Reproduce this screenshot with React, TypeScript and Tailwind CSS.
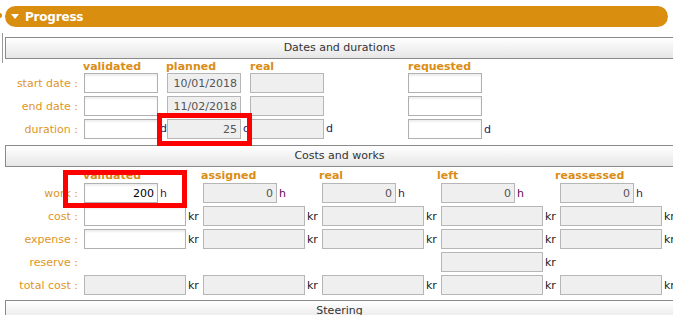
import React from "react";

type BoxProps = { className?: string; gray?: boolean; value?: string };

function Box({ className = "", gray = false, value = "" }: BoxProps) {
  return (
    <div
      className={`h-[20px] shrink-0 border flex items-center justify-end pr-[3px] text-[11px] leading-none ${
        gray
          ? "bg-[#efefef] border-[#b6b6b6] text-[#555555]"
          : "bg-white border-[#b0b0b0] shadow-[inset_0_2px_2px_rgba(0,0,0,0.07)] text-black"
      } ${className}`}
    >
      {value}
    </div>
  );
}

function Unit({ children, className = "" }: { children?: React.ReactNode; className?: string }) {
  return <span className={`pl-[2px] text-[11px] leading-none ${className}`}>{children}</span>;
}

function Label({ children }: { children: React.ReactNode }) {
  return (
    <div className="w-[84px] shrink-0 pr-[6px] text-right text-[11px] text-[#e0951f] leading-none">
      {children}
    </div>
  );
}

function SectionHeader({ title }: { title: string }) {
  return (
    <div className="ml-[5px] h-[22px] border-t border-b border-l border-[#8a8a8a] bg-gradient-to-b from-white to-[#e6e6e6] flex items-center justify-center text-[11px] text-[#333333]">
      {title}
    </div>
  );
}

const costCols = [0, 1, 2, 3, 4];

function CostRow({ label, gray }: { label: string; gray: (i: number) => boolean }) {
  return (
    <div className="flex items-center h-[20px]">
      <Label>{label}</Label>
      {costCols.map((i) => (
        <div key={i} className="w-[119px] shrink-0 flex items-center">
          <Box className="w-[102px]" gray={gray(i)} />
          <Unit className="text-[#1a1a1a]">kr</Unit>
        </div>
      ))}
    </div>
  );
}

export default function App() {
  return (
    <div className="relative w-[673px] h-[315px] overflow-hidden bg-white font-['DejaVu_Sans',sans-serif]">
      {/* stray bits of neighbouring panels */}
      <div className="absolute left-0 top-[13px] w-[2px] h-[5px] bg-[#d98e0f] rounded-r" />
      <div className="absolute left-[2px] top-[33px] w-px h-[30px] bg-[#9a9a9a]" />

      {/* Progress bar */}
      <div className="pt-[6px]">
        <div className="ml-[5px] w-[663px] h-[21px] rounded-full bg-[#d98e0f] flex items-center pl-[6px]">
          <span className="w-0 h-0 border-l-[4px] border-r-[4px] border-t-[5px] border-l-transparent border-r-transparent border-t-white mr-[6px]" />
          <span className="text-white font-bold text-[12px] tracking-[-0.2px]">Progress</span>
        </div>
      </div>

      {/* Dates and durations */}
      <div className="mt-[10px]">
        <SectionHeader title="Dates and durations" />
        <div className="flex h-[14px] items-center pl-[83px] text-[11px] font-bold text-[#da8d16] leading-none">
          <div className="w-[83px]">validated</div>
          <div className="w-[84px]">planned</div>
          <div className="w-[158px]">real</div>
          <div>requested</div>
        </div>
        <div className="flex flex-col gap-[3px]">
          <div className="flex items-center h-[20px]">
            <Label>start date :</Label>
            <Box className="w-[74px]" />
            <span className="w-[9px]" />
            <Box className="w-[74px]" gray value="10/01/2018" />
            <span className="w-[9px]" />
            <Box className="w-[74px]" gray />
            <span className="w-[84px]" />
            <Box className="w-[74px]" />
          </div>
          <div className="flex items-center h-[20px]">
            <Label>end date :</Label>
            <Box className="w-[74px]" />
            <span className="w-[9px]" />
            <Box className="w-[74px]" gray value="11/02/2018" />
            <span className="w-[9px]" />
            <Box className="w-[74px]" gray />
            <span className="w-[84px]" />
            <Box className="w-[74px]" />
          </div>
          <div className="flex items-center h-[20px]">
            <Label>duration :</Label>
            <Box className="w-[74px]" />
            <span className="w-[9px] pl-[2px] text-[11px] text-[#1b1b6b]">d</span>
            <Box className="w-[74px]" gray value="25" />
            <span className="w-[9px] pl-[2px] text-[11px] text-[#1b1b6b]">d</span>
            <Box className="w-[74px]" gray />
            <span className="w-[84px] pl-[2px] text-[11px] text-[#1b1b6b]">d</span>
            <Box className="w-[74px]" />
            <Unit className="text-[#1b1b6b]">d</Unit>
          </div>
        </div>
      </div>

      {/* Costs and works */}
      <div className="mt-[6px]">
        <SectionHeader title="Costs and works" />
        <div className="flex h-[16px] items-center pl-[83px] text-[11px] font-bold text-[#da8d16] leading-none">
          <div className="w-[119px]">validated</div>
          <div className="w-[119px]">assigned</div>
          <div className="w-[119px]">real</div>
          <div className="w-[119px]">left</div>
          <div className="w-[119px]">reassessed</div>
        </div>
        <div className="flex flex-col gap-[3px]">
          <div className="flex items-center h-[20px]">
            <Label>work :</Label>
            {costCols.map((i) => (
              <div key={i} className="w-[119px] shrink-0 flex items-center">
                <Box className="w-[74px]" gray={i > 0} value={i === 0 ? "200" : "0"} />
                <Unit className="text-[#5c0a4a]">h</Unit>
              </div>
            ))}
          </div>
          <CostRow label="cost :" gray={(i) => i > 0} />
          <CostRow label="expense :" gray={(i) => i > 0} />
          <div className="flex items-center h-[20px]">
            <Label>reserve :</Label>
            <div className="w-[357px] shrink-0" />
            <div className="w-[119px] shrink-0 flex items-center">
              <Box className="w-[102px]" gray />
              <Unit className="text-[#1a1a1a]">kr</Unit>
            </div>
          </div>
          <CostRow label="total cost :" gray={() => true} />
        </div>
      </div>

      {/* Steering */}
      <div className="mt-[5px]">
        <SectionHeader title="Steering" />
      </div>

      {/* highlight boxes */}
      <div className="absolute left-[157px] top-[113px] w-[95px] h-[33px] border-[5px] border-[#ff0000]" />
      <div className="absolute left-[63px] top-[170px] w-[124px] h-[38px] border-[5px] border-[#ff0000]" />
    </div>
  );
}
